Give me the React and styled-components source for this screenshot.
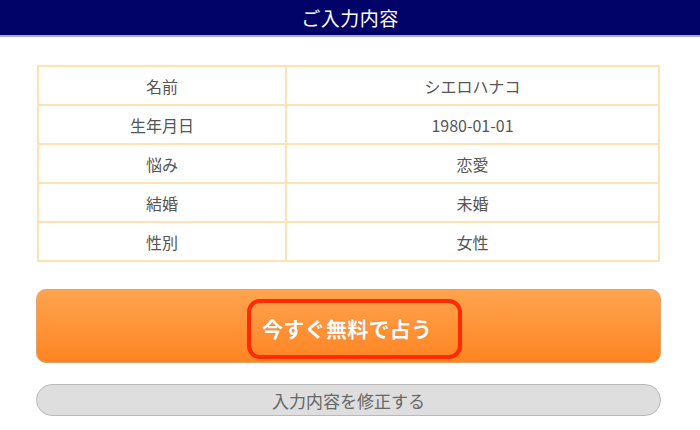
import React from "react";
import styled, { createGlobalStyle } from "styled-components";

const Global = createGlobalStyle`
  html, body { margin: 0; padding: 0; background: #fff; }
  body { font-family: "Noto Sans CJK JP", "Noto Sans", sans-serif; }
`;

const Page = styled.div`
  width: 700px;
  height: 430px;
  overflow: hidden;
  background: #fff;
`;

const Header = styled.header`
  height: 35px;
  background: #020368;
  border-bottom: 2px solid #a9aae2;
  display: flex;
  align-items: center;
  justify-content: center;
  color: #fff;
  font-size: 19px;
  letter-spacing: 0.5px;
`;

const Content = styled.main`
  padding: 28px 39px 0 36px;
  display: flex;
  flex-direction: column;
`;

const Table = styled.table`
  margin: 0 0 0 1px;
  width: 623px;
  border-collapse: collapse;
  border: 2px solid #fde2b3;
`;

const Cell = styled.td`
  border: 2px solid #fde2b3;
  height: 37px;
  padding: 0;
  text-align: center;
  vertical-align: middle;
  font-size: 16px;
  color: #555;
  width: ${(p) => (p.$label ? "246px" : "auto")};
`;

const Primary = styled.button`
  margin-top: 27px;
  height: 74px;
  width: 625px;
  border: 1px solid #e5a168;
  border-radius: 10px;
  background: linear-gradient(#ffa44f, #ff8422);
  display: flex;
  align-items: center;
  justify-content: center;
  padding: 0;
  cursor: pointer;
  font-family: inherit;
`;

const Highlight = styled.span`
  box-sizing: border-box;
  width: 215px;
  height: 60px;
  border: 4px solid #ff2a00;
  border-radius: 13px;
  display: flex;
  align-items: center;
  justify-content: flex-start;
  padding: 0 0 2px 11px;
  color: #fff;
  font-weight: 700;
  font-size: 21px;
  letter-spacing: 0.3px;
  text-shadow: 0 0 1px rgba(160, 70, 0, 0.4);
  margin-top: 6px;
  margin-left: 12px;
`;

const Secondary = styled.button`
  margin-top: 21px;
  height: 32px;
  width: 625px;
  border: 1px solid #b9b9b9;
  border-radius: 16px;
  background: #dedede;
  color: #666;
  font-size: 17px;
  font-family: inherit;
  padding: 0;
  display: flex;
  align-items: center;
  justify-content: center;
`;

const rows = [
  ["名前", "シエロハナコ"],
  ["生年月日", "1980-01-01"],
  ["悩み", "恋愛"],
  ["結婚", "未婚"],
  ["性別", "女性"],
];

export default function App() {
  return (
    <Page>
      <Global />
      <Header>ご入力内容</Header>
      <Content>
        <Table>
          <tbody>
            {rows.map(([k, v]) => (
              <tr key={k}>
                <Cell $label>{k}</Cell>
                <Cell>{v}</Cell>
              </tr>
            ))}
          </tbody>
        </Table>
        <Primary>
          <Highlight>今すぐ無料で占う</Highlight>
        </Primary>
        <Secondary>入力内容を修正する</Secondary>
      </Content>
    </Page>
  );
}
